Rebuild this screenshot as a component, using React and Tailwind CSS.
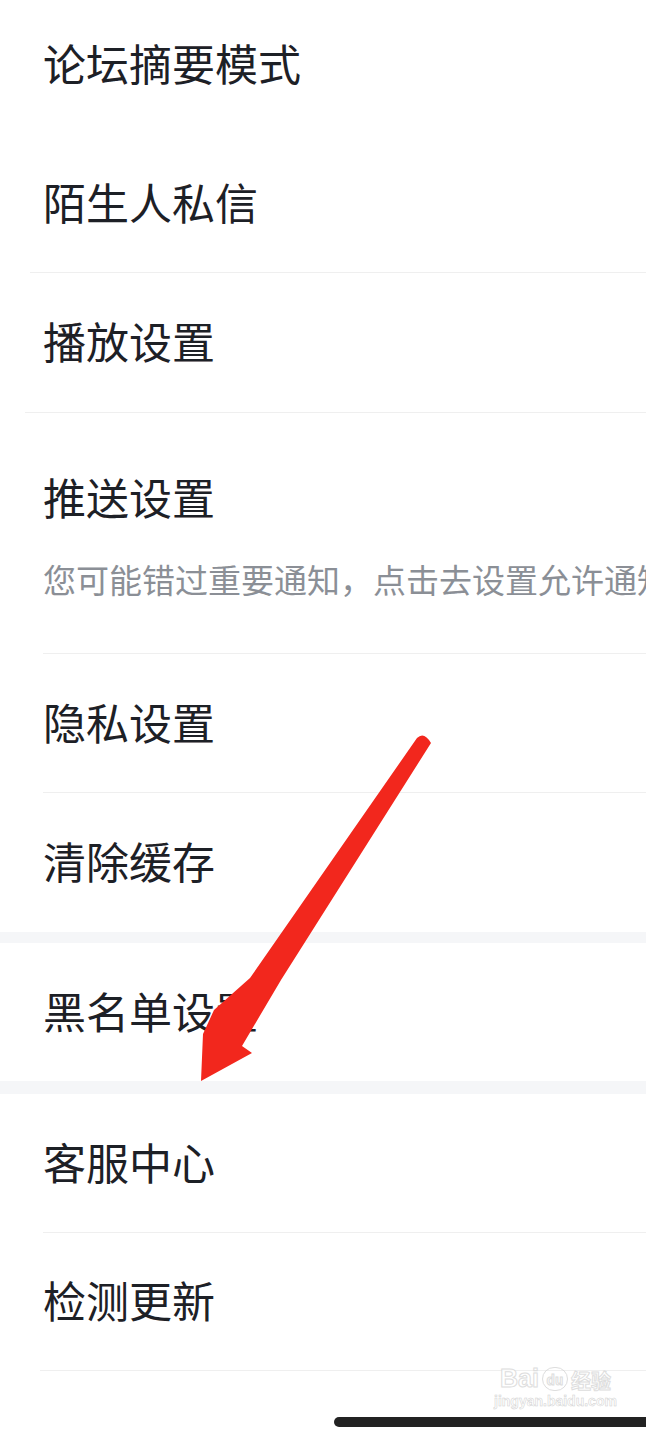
import React from "react";

const font = { fontFamily: '"Noto Sans CJK SC", "Noto Sans", sans-serif' };

function Row({ title, sub, h = "h-[138px]", line = "ml-[43px]", pb = "pb-[4px]" }) {
  return (
    <div>
      <div className={`${h} ${pb} flex flex-col justify-center pl-[43px]`}>
        <div className="text-[43px] leading-none text-[#1d2026]">{title}</div>
        {sub && (
          <div className="mt-[45px] whitespace-nowrap text-[33px] leading-none text-[#8b8f96]">
            {sub}
          </div>
        )}
      </div>
      {line && <div className={`h-px bg-[#efefef] ${line}`} />}
    </div>
  );
}

function Band({ h }) {
  return <div className={`${h} bg-[#f5f6f8]`} />;
}

function Arrow() {
  return (
    <svg
      className="pointer-events-none absolute left-0 top-0"
      width="646"
      height="1440"
      viewBox="0 0 646 1440"
    >
      <path
        d="M417 738 Q424 731 431 743 L281 980 L242 1046 L252 1053 L201 1081 L203 1034 L214 1010 L250 978 Z"
        fill="#f2271d"
      />
    </svg>
  );
}

function Watermark() {
  return (
    <div className="pointer-events-none absolute left-[494px] top-[1366px] flex flex-col items-center opacity-80">
      <div className="flex items-end text-[25px] font-bold leading-none text-white [-webkit-text-stroke:1px_#d6d6d6]">
        <span style={{ fontFamily: '"Liberation Sans", sans-serif' }}>Bai</span>
        <span className="mx-[3px] flex h-[24px] w-[26px] items-center justify-center rounded-full border border-[#d6d6d6] text-[13px]">
          du
        </span>
        <span className="text-[20px]">经验</span>
      </div>
      <div
        className="mt-[3px] text-[14px] font-bold leading-none text-white [-webkit-text-stroke:0.5px_#c4c4c4]"
        style={{ fontFamily: '"Liberation Sans", sans-serif' }}
      >
        jingyan.baidu.com
      </div>
    </div>
  );
}

export default function App() {
  return (
    <div className="relative h-[1440px] w-[646px] overflow-hidden bg-white" style={font}>
      <Row title="论坛摘要模式" h="h-[134px]" pb="pb-[10px]" line="" />
      <Row title="陌生人私信" line="ml-[30px]" />
      <Row title="播放设置" h="h-[139px]" line="ml-[25px]" />
      <Row
        title="推送设置"
        sub="您可能错过重要通知，点击去设置允许通知"
        h="h-[240px]"
        pb="pt-[4px]"
      />
      <Row title="隐私设置" />
      <Row title="清除缓存" h="h-[139px]" line="" />
      <Band h="h-[11px]" />
      <Row title="黑名单设置" line="" />
      <Band h="h-[13px]" />
      <Row title="客服中心" />
      <Row title="检测更新" h="h-[137px]" line="ml-[40px]" />
      <div className="flex h-[69px] items-start justify-end pt-[46px]">
        <div className="h-[10px] w-[312px] rounded-l-full bg-[#222]" />
      </div>
      <Watermark />
      <Arrow />
    </div>
  );
}
